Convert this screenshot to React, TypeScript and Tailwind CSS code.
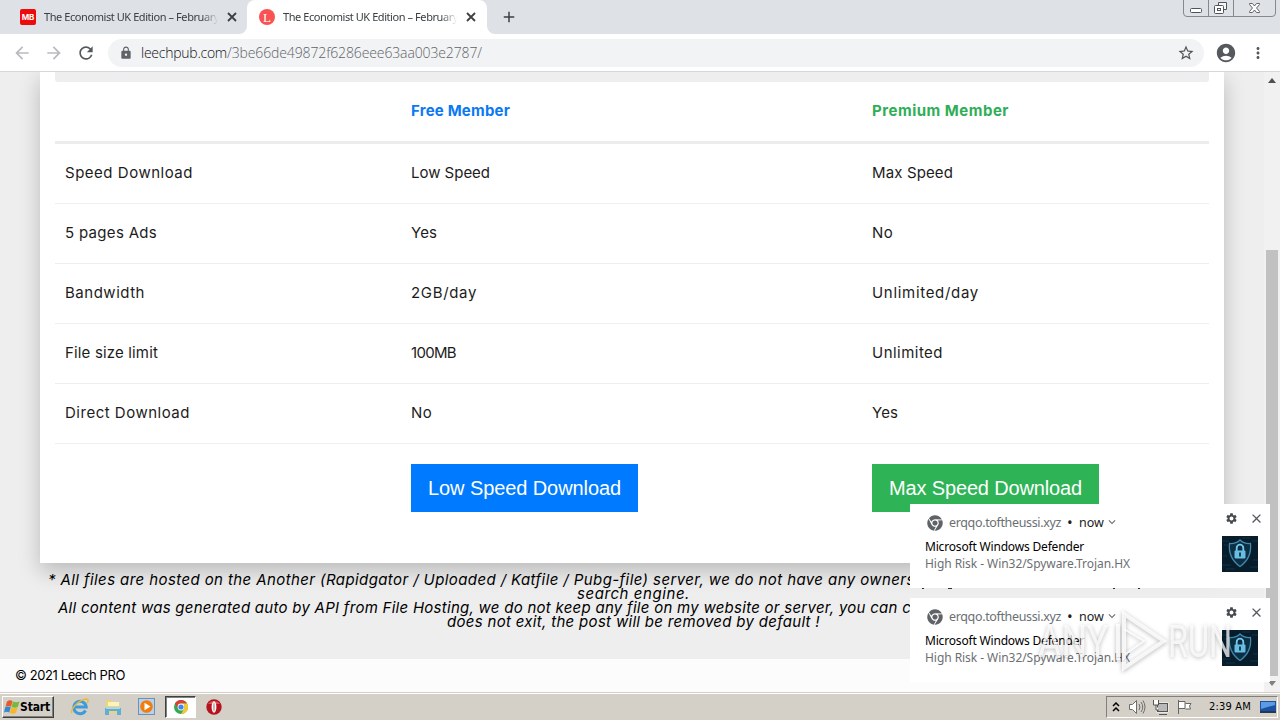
import { useLayoutEffect, useRef, useState } from 'react';
import { MdArrowBack, MdArrowForward, MdRefresh, MdLock, MdStarBorder, MdAccountCircle, MdMoreVert, MdSettings, MdClose, MdAdd, MdExpandMore } from 'react-icons/md';
import { FaChrome } from 'react-icons/fa';

/** A single line of text whose letter spacing is adjusted to fill a width. */
function Line({ w, className = '', children }: { w: number; className?: string; children: string }) {
  const ref = useRef<HTMLSpanElement>(null);
  const [spacing, setSpacing] = useState(0);
  useLayoutEffect(() => {
    if (ref.current) setSpacing((w - ref.current.getBoundingClientRect().width) / children.length);
  }, [w, children]);
  return (
    <span ref={ref} className={`inline-block shrink-0 whitespace-pre ${className}`} style={{ letterSpacing: `${spacing}px` }}>
      {children}
    </span>
  );
}

function Tab({ active, title }: { active?: boolean; title: string }) {
  return (
    <div className={`relative flex h-[34px] items-center ${active ? 'w-[240px] rounded-t-lg bg-white pl-3' : 'w-[247px] pl-5'}`}>
      {active ? (
        <div className="flex size-4 items-center justify-center rounded-full bg-[#fa5252] font-['Liberation_Serif',serif] text-[13px] leading-none text-white">L</div>
      ) : (
        <div className="flex size-4 items-center justify-center rounded-[2px] bg-[#ed0b0b] font-['Inter',sans-serif] text-[8px] leading-none font-bold text-white">MB</div>
      )}
      <div className="ml-2 w-[174px] overflow-hidden font-['Noto_Sans',sans-serif] text-[11px] text-[#3c4043] [mask-image:linear-gradient(to_right,black_158px,transparent_174px)]">
        <Line w={175}>{title}</Line>
      </div>
      <svg className="ml-[9px]" width="10" height="10"><path d="M1 1l8 8M9 1L1 9" stroke="#3c4043" strokeWidth="1.800" /></svg>
      {active && (
        <>
          <svg className="absolute bottom-0 -left-2" width="8" height="8"><path d="M8 0v8H0a8 8 0 0 0 8-8z" fill="#fff" /></svg>
          <svg className="absolute -right-2 bottom-0" width="8" height="8"><path d="M0 0v8h8a8 8 0 0 1-8-8z" fill="#fff" /></svg>
        </>
      )}
    </div>
  );
}

function WindowButtons() {
  return (
    <svg width="94" height="17" className="absolute top-0 left-[1183px]" fill="none">
      <path d="M.5 0v13q0 3.500 3.500 3.500h85q3.500 0 3.500-3.500V0M25.500 0v16M50.500 0v16" stroke="#858990" />
      <rect x="7.500" y="8.500" width="11" height="4" rx="1" fill="#fff" stroke="#50545a" />
      <path d="M35.500 5V2.500h8v7H41" stroke="#50545a" fill="#f5f5f6" />
      <rect x="31.500" y="5.500" width="9" height="8" rx="1" fill="#fff" stroke="#50545a" />
      <rect x="34.500" y="8.500" width="3" height="2" stroke="#50545a" />
      <path d="M66.500 3.500h3l2 2.500 2-2.500h3v1l-3 3.500 3 3.500v1h-3l-2-2.500-2 2.500h-3v-1l3-3.500-3-3.500z" fill="#fff" stroke="#60646a" />
    </svg>
  );
}

const rows: { label: [string, number]; free: [string, number]; premium: [string, number] }[] = [
  { label: ['Speed Download', 128], free: ['Low Speed', 79], premium: ['Max Speed', 81] },
  { label: ['5 pages Ads', 92], free: ['Yes', 26], premium: ['No', 21] },
  { label: ['Bandwidth', 80], free: ['2GB/day', 66], premium: ['Unlimited/day', 107] },
  { label: ['File size limit', 93], free: ['100MB', 45], premium: ['Unlimited', 71] },
  { label: ['Direct Download', 125], free: ['No', 21], premium: ['Yes', 26] },
];

const columns = 'grid grid-cols-[346px_461px_347px]';

function ShieldImage() {
  return (
    <svg width="36" height="36" viewBox="0 0 36 36">
      <rect width="36" height="36" fill="#081d2c" />
      <path d="M0 5h7M2 9h4M0 29h9M28 31h8M30 5h6M1 20h4M31 24h5M4 33h9M20 2h8" stroke="#0e2c3d" strokeWidth="1.500" />
      <path d="M18 4q4 4 10.500 3.500Q30 22 18 30.500 6 22 7.500 7.500 14 8 18 4z" fill="#0c2f44" stroke="#4289ad" strokeWidth="1.300" />
      <path d="M14.700 15v-3a3.300 3.300 0 0 1 6.600 0v3" fill="none" stroke="#75c8ec" strokeWidth="1.800" />
      <rect x="12.500" y="14.500" width="11" height="8" rx="1" fill="#69bce2" />
      <path d="M18 16.500v4" stroke="#0c354c" strokeWidth="1.800" />
    </svg>
  );
}

function Notification() {
  return (
    <div className="flex h-[84px] w-[360px] justify-between bg-white pt-2 pr-[7px] pl-[15px] font-['Noto_Sans',sans-serif] text-[12px] leading-[17px]">
      <div>
        <div className="flex h-5 items-center pl-[2px]">
          <FaChrome className="mt-px size-4 text-[#5f6368]" />
          <Line w={112} className="ml-1.5 text-[12.5px] text-[#6b6f73]">erqqo.toftheussi.xyz</Line>
          <Line w={8} className="ml-[6px] text-[15px] text-[#202124]">•</Line>
          <Line w={25} className="ml-1 text-[12.5px] text-[#202124]">now</Line>
          <MdExpandMore className="ml-px size-3.5 text-[#6b6f73]" />
        </div>
        <div className="mt-[6px] flex flex-col items-start">
          <Line w={159} className="text-black">Microsoft Windows Defender</Line>
          <Line w={205} className="text-[#6b6f73]">High Risk - Win32/Spyware.Trojan.HX</Line>
        </div>
      </div>
      <div className="flex w-[41px] flex-col">
        <div className="flex h-3 items-center gap-[11px] pl-[3px]">
          <MdSettings className="size-[13px] shrink-0 text-[#45494d]" />
          <MdClose className="size-[15px] shrink-0 text-[#54585c]" />
        </div>
        <div className="mt-3"><ShieldImage /></div>
      </div>
    </div>
  );
}

function Watermark() {
  return (
    <div className="absolute top-[608px] left-[1038px] flex h-[66px] w-[200px] items-center font-['Roboto',sans-serif] text-[45px] leading-none text-white/75 [filter:drop-shadow(0_1px_2px_rgba(0,0,0,0.35))]">
      <div className="w-[75px] shrink-0"><span className="inline-block origin-left scale-x-[.8]">ANY</span></div>
      <svg className="shrink-0" width="55" height="64" viewBox="0 0 55 64" fill="none" stroke="#fff" strokeOpacity=".8" strokeWidth="4">
        <path d="M5 15v36M11 5v54l40-27z" />
        <path d="M11 20l20 12-20 14" strokeWidth="2" />
      </svg>
      <div className="w-[62px] shrink-0"><span className="inline-block origin-left scale-x-[.72]">RUN</span></div>
    </div>
  );
}

function Taskbar() {
  return (
    <div className="flex h-7 shrink-0 items-center border-t border-[#d4d0c8] bg-[#d4d0c8] pl-[2px] shadow-[inset_0_1px_0_#fff]">
      <div className="mt-[1px] flex h-[22px] w-[52px] items-center border border-t-white border-r-[#404040] border-b-[#404040] border-l-white pl-px font-['DejaVu_Sans_Condensed','DejaVu_Sans',sans-serif] text-[12px] font-bold text-black shadow-[inset_-1px_-1px_0_#808080]">
        <svg className="shrink-0" width="16" height="16" viewBox="0 0 16 16">
          <path d="M3 2.500q3-2 5.500-.500L7 7.800Q4.500 6.300 1.500 7.800z" fill="#e85b28" />
          <path d="M9 2.500q3 1.500 6.500 0L13.800 8q-3 1.500-6.300 0z" fill="#78b83b" />
          <path d="M1.200 8.300Q4 6.800 6.800 8.300L5.200 13.500Q2.500 12 0 13.500z" fill="#3388cf" />
          <path d="M7.300 8.500q3 1.500 6.300 0l-1.800 5.500q-3 1.500-6.100 0z" fill="#f7b72b" />
        </svg>
        <Line w={30}>Start</Line>
      </div>
      <svg className="ml-[16px]" width="20" height="20" viewBox="0 0 20 20" fill="none">
        <path d="M15.500 13.500A6.200 6.200 0 1 1 16.200 10H5" stroke="#3b9bdc" strokeWidth="3" />
        <path d="M2 16C0 13 8 3 16 2c3 0 2 3 1 4" stroke="#e8b93c" strokeWidth="1.500" />
      </svg>
      <svg className="ml-[14px]" width="18" height="18" viewBox="0 0 18 18">
        <path d="M2 2h5l1 2h7v11H2z" fill="#ecd47a" /><path d="M4 4h11v4H4z" fill="#fff3b5" />
        <path d="M1 10h16v7h-4v-4H5v4H1z" fill="#62add2" /><path d="M2 9h14v2H2z" fill="#a9d8eb" />
      </svg>
      <svg className="ml-[16px]" width="17" height="17" viewBox="0 0 17 17">
        <rect x=".5" y=".5" width="16" height="16" fill="#b9d2e9" stroke="#6a92b9" />
        <circle cx="8.500" cy="8.500" r="6.300" fill="#f17d0e" /><path d="M6.500 4.700v7.600l6-3.800z" fill="#fff" />
      </svg>
      <div className="ml-[10px] flex h-[22px] w-[31px] items-center justify-center border border-t-[#404040] border-r-white border-b-white border-l-[#404040] bg-white shadow-[inset_1px_1px_0_#808080]">
        <svg width="14" height="14" viewBox="0 0 14 14">
          <circle cx="7" cy="7" r="7" fill="#36a852" />
          <path d="M.94 3.500A7 7 0 0 1 13.060 3.500H7A3.500 3.500 0 0 0 3.970 8.750z" fill="#df3e30" />
          <path d="M13.060 3.500A7 7 0 0 1 7 14L10.030 8.750A3.500 3.500 0 0 0 7 3.500z" fill="#fbc72d" />
          <circle cx="7" cy="7" r="3.400" fill="#fff" /><circle cx="7" cy="7" r="2.600" fill="#4184ef" />
        </svg>
      </div>
      <svg className="ml-[10px]" width="16" height="16" viewBox="0 0 16 16">
        <circle cx="8" cy="8" r="7.700" fill="#b51320" /><path d="M2 5a7 6 0 0 1 12 0z" fill="#d85558" />
        <ellipse cx="8" cy="8" rx="2.400" ry="5.700" fill="#fff" /><ellipse cx="8" cy="8" rx=".7" ry="4.600" fill="#c88" />
      </svg>
      <div className="mt-px mr-[2px] ml-auto flex h-[22px] w-[172px] items-center border border-t-[#808080] border-r-white border-b-white border-l-[#808080] pl-[5px] text-black">
        <svg width="8" height="10" fill="none" stroke="#000" strokeWidth="1.500"><path d="M1 4l3-3 3 3M1 9l3-3 3 3" /></svg>
        <svg className="ml-[8px]" width="18" height="16" fill="none" stroke="#6d6d6d">
          <path d="M1.500 5.500h3l4-4v13l-4-4h-3z" fill="#fff" /><path d="M11 5q2 3 0 6M13 3q3.500 5 0 10M15 1.500q4 6.500 0 13" />
        </svg>
        <svg className="ml-[6px]" width="17" height="16" fill="none" stroke="#555">
          <rect x="5.500" y="4.500" width="10" height="8" fill="#b9b9b9" stroke="#fff" strokeWidth="2" /><rect x="5.500" y="4.500" width="10" height="8" fill="#b9b9b9" />
          <path d="M7 15.500h8M1.500 1v5h5V1M4 6v5h3" fill="#fff" />
        </svg>
        <svg className="ml-[7px]" width="17" height="16" fill="#fff" stroke="#666">
          <path d="M2.500 1v14M3 2.500h6v7H3M9.500 4.500H15L13.500 7l1 3h-5" />
        </svg>
        <Line w={42} className="ml-[16px] font-['DejaVu_Sans_Condensed','DejaVu_Sans',sans-serif] text-[11px]">2:39 AM</Line>
        <svg className="ml-[9px]" width="16" height="14"><path d="M0 1h16v10H0z" fill="#1c50a5" /><path d="M1 2h14v3L1 9z" fill="#5b9be3" /><path d="M0 11h16v2H0z" fill="#26384e" /></svg>
      </div>
    </div>
  );
}

export default function App() {
  return (
    <div className="relative flex h-[720px] w-[1280px] flex-col overflow-hidden bg-[#eee] font-['Inter',sans-serif] text-black">
      <header className="shrink-0">
        <div className="flex h-[34px] items-center bg-[#dee1e6]">
          <Tab title="The Economist UK Edition – February" />
          <Tab active title="The Economist UK Edition – February" />
          <MdAdd className="ml-[13px] size-[18px] text-[#3c4043]" />
        </div>
        <div className="flex h-[38px] items-center border-b border-[#d5d7da] bg-white pr-[12px] pl-[12px]">
          <MdArrowBack className="size-5 text-[#b8babd]" />
          <MdArrowForward className="ml-3 size-5 text-[#b8babd]" />
          <MdRefresh className="ml-3 size-5 text-[#55595e]" />
          <div className="ml-3 flex h-7 w-[1096px] items-center rounded-full bg-[#f1f3f4] pr-[9px] pl-[11px] font-['Open_Sans',sans-serif] text-[14px] font-light">
            <MdLock className="size-[14px] text-[#5f6368]" />
            <Line w={86} className="ml-[8px] text-[#101114]">leechpub.com</Line>
            <Line w={255} className="text-[#5f6368]">/3be66de49872f6286eee63aa003e2787/</Line>
            <MdStarBorder className="ml-auto size-[18px] text-[#4f5357]" />
          </div>
          <MdAccountCircle className="ml-[11px] size-[22px] text-[#55595e]" />
          <MdMoreVert className="ml-[12px] size-[18px] text-[#55595e]" />
        </div>
      </header>

      <div className="flex h-[620px] shrink-0">
        <main className="flex w-[1264px] flex-col overflow-hidden">
          <section className="mx-10 h-[491px] shrink-0 bg-white px-[15px] shadow-[0_8px_20px_rgba(0,0,0,0.22)]">
            <div className="h-[10px] rounded-b-[3px] bg-[#eee]" />
            <div className={`${columns} h-[62px] items-center border-b-[3px] border-[#ececec] text-[15px] font-bold`}>
              <div />
              <div className="pl-[10px]"><Line w={99} className="text-[#0b79f3]">Free Member</Line></div>
              <div className="pl-[10px]"><Line w={137} className="text-[#2fae58]">Premium Member</Line></div>
            </div>
            {rows.map((r) => (
              <div key={r.label[0]} className={`${columns} h-[60px] items-center border-b border-[#eee] text-[15px] text-[#1c1c1c]`}>
                {[r.label, r.free, r.premium].map(([text, w], i) => (
                  <div key={i} className="pl-[10px]"><Line w={w}>{text}</Line></div>
                ))}
              </div>
            ))}
            <div className={`${columns} pt-5 font-['Liberation_Sans',sans-serif] text-[20px] text-white`}>
              <div />
              <div className="ml-[10px] flex h-12 w-[227px] items-center justify-center bg-[#007bff]"><Line w={193}>Low Speed Download</Line></div>
              <div className="ml-[10px] flex h-12 w-[227px] items-center justify-center bg-[#2eb456]"><Line w={193}>Max Speed Download</Line></div>
            </div>
          </section>
          <div className="flex h-24 shrink-0 flex-col items-start pt-[10px] text-[15px] leading-[14px] italic">
            <Line w={876} className="ml-[48px]">* All files are hosted on the Another (Rapidgator / Uploaded / Katfile / Pubg-file) server, we do not have any ownersh</Line>
            <Line w={113} className="ml-[577px]">search engine.</Line>
            <Line w={853} className="ml-[58px]">All content was generated auto by API from File Hosting, we do not keep any file on my website or server, you can c</Line>
            <Line w={373} className="ml-[447px]">does not exit, the post will be removed by default !</Line>
          </div>
          <footer className="flex h-[33px] shrink-0 items-center bg-[#fcfcfc] pl-[15px] text-[13px]"><Line w={110}>© 2021 Leech PRO</Line></footer>
        </main>
        <aside className="flex w-4 flex-col items-center bg-[#f1f1f1]">
          <svg className="mt-[6px]" width="8" height="5"><path d="M4 0l4 5H0z" fill="#505050" /></svg>
          <div className="mt-[167px] h-[426px] w-3 bg-[#c1c1c1]" />
          <svg className="mt-[5px]" width="8" height="5"><path d="M0 0h8L4 5z" fill="#808080" /></svg>
        </aside>
      </div>
      <Taskbar />
      <WindowButtons />
      <div className="absolute top-[504px] left-[910px] flex flex-col">
        <Notification />
        <svg width="360" height="10"><path d="M12 .5h2M38 .5h4M203 .5h2M228 .5h2" stroke="#333" /></svg>
        <Notification />
      </div>
      <Watermark />
    </div>
  );
}
